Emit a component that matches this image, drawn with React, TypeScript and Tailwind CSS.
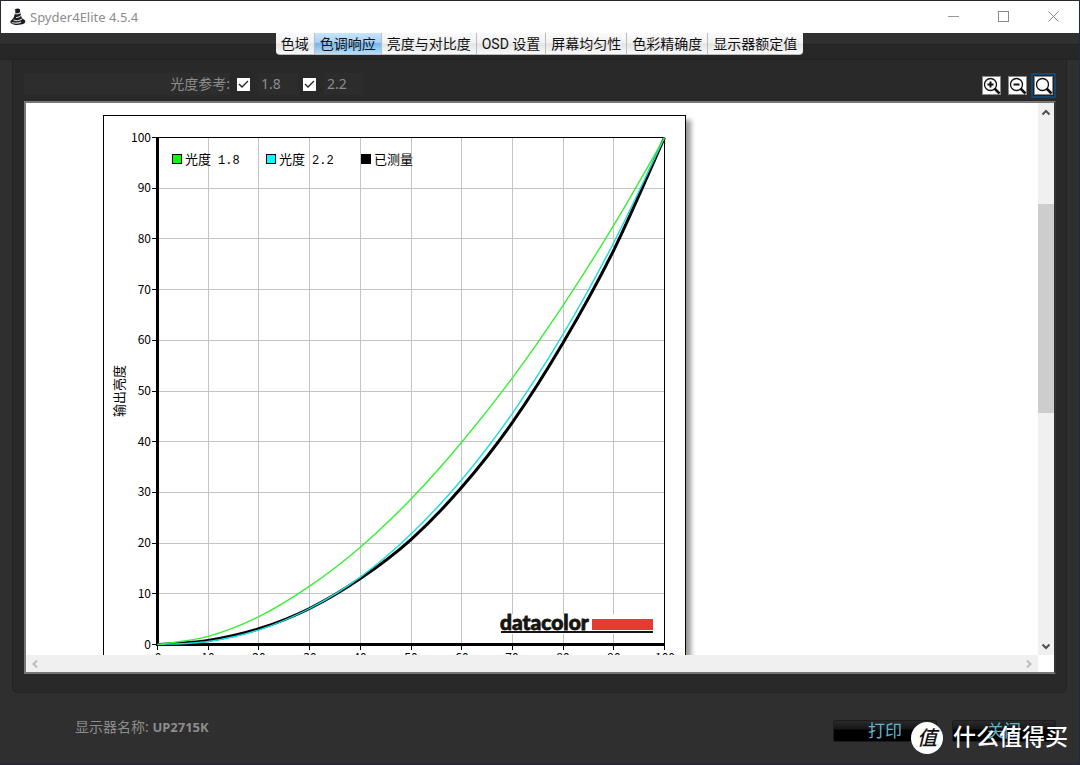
import React from "react";

const uiFont = "font-['Noto_Sans','Noto_Sans_CJK_SC',sans-serif]";
const cjkFont = "font-['Roboto','Noto_Sans_CJK_SC',sans-serif]";
const chartFont = "font-['Noto_Sans_CJK_SC',sans-serif]";
const monoFont = "font-['Liberation_Mono',monospace]";
const logoFont = "font-['Lato',sans-serif]";

const tabs = [
  "色域",
  "色调响应",
  "亮度与对比度",
  "OSD 设置",
  "屏幕均匀性",
  "色彩精确度",
  "显示器额定值",
];

const steps = [0, 10, 20, 30, 40, 50, 60, 70, 80, 90, 100];
const gamma18 = [0, 1.6, 5.5, 11.5, 19.2, 28.7, 39.9, 52.6, 66.9, 82.7, 100];
const gamma22 = [0, 0.6, 2.9, 7.1, 13.3, 21.8, 32.5, 45.6, 61.2, 79.3, 100];
const measured = [0, 0.8, 3.1, 7.1, 13, 20.7, 31, 43.8, 59.5, 77.8, 100];

const plot = { left: 53.5, top: 21.5, size: 507 };
const px = (v: number) => plot.left + (plot.size * v) / 100;
const py = (v: number) => plot.top + plot.size - (plot.size * v) / 100;
const snap = (v: number) => Math.floor(v) + 0.5;

// smooth curve through the sampled points
const curve = (values: number[]) => {
  const pts = values.map((v, i) => [px(steps[i]), py(v)]);
  let d = `M${pts[0][0]} ${pts[0][1]}`;
  for (let i = 0; i < pts.length - 1; i++) {
    const a = pts[i - 1] || pts[i];
    const b = pts[i];
    const c = pts[i + 1];
    const e = pts[i + 2] || c;
    d += ` C${b[0] + (c[0] - a[0]) / 6} ${b[1] + (c[1] - a[1]) / 6} ${
      c[0] - (e[0] - b[0]) / 6
    } ${c[1] - (e[1] - b[1]) / 6} ${c[0]} ${c[1]}`;
  }
  return d;
};

const TitleBar = () => (
  <header
    className={`flex h-[33px] shrink-0 items-center justify-between border-t border-l border-[#2b2630] bg-white pr-5 pl-2 ${uiFont}`}
  >
    <div className="flex items-center gap-1">
      <svg width="17" height="18" viewBox="0 0 17 18">
        <path
          d="M6 1.2Q8.5 0 11 1.2L11 4L12.8 10L16.2 12.5Q17 16 12 16.600Q8 17.500 4.500 16.400Q0.500 15.500 1.500 13L4.500 10L6.400 4Z"
          fill="#1c1c1c"
        />
        <path
          d="M6 5.500Q9 6.500 11.500 4.500M7 9.500Q10 9.800 11.800 7.500M4.500 12Q9 13.800 13 11M3 14.500Q8 16 12 14"
          stroke="#d8d8d8"
          strokeWidth="1.100"
          fill="none"
        />
      </svg>
      <h1 className="text-[13px] leading-4 text-[#8c8c8c]">Spyder4Elite 4.5.4</h1>
    </div>
    <div className="flex items-center gap-[38px]">
      <button aria-label="最小化">
        <svg width="12" height="12" viewBox="0 0 12 12">
          <path d="M1 5.500H12" stroke="#999" />
        </svg>
      </button>
      <button aria-label="最大化">
        <svg width="12" height="12" viewBox="0 0 12 12">
          <rect x="1.500" y="0.500" width="10" height="10" fill="none" stroke="#888" />
        </svg>
      </button>
      <button aria-label="关闭窗口">
        <svg width="12" height="12" viewBox="0 0 12 12">
          <path d="M1.500 0.500L11.500 10.500M11.500 0.500L1.500 10.500" stroke="#888" />
        </svg>
      </button>
    </div>
  </header>
);

const TabBar = () => (
  <nav className="flex h-[27px] shrink-0 items-start justify-center bg-[linear-gradient(#303030_11px,#222_11px,#222_12px,#282828_12px,#262626_26px,#222_26px)]">
    <div
      role="tablist"
      className={`flex h-[22px] overflow-hidden rounded-b-[4px] border-b border-[#bbb] bg-[linear-gradient(#fafafa,#f2f2f2_45%,#e4e4e4_55%,#fafafa)] text-sm text-[#111] ${cjkFont}`}
    >
      {tabs.map((tab) => (
        <button
          key={tab}
          role="tab"
          aria-selected={tab === "色调响应"}
          className="border-r border-[#bcbcbc] px-[5px] leading-5 whitespace-nowrap last:border-transparent aria-selected:bg-[linear-gradient(#c8e4fc,#a6d2f8_45%,#76b5ee_50%,#b4e0fc)]"
        >
          {tab}
        </button>
      ))}
    </div>
  </nav>
);

const RefCheck = ({ label, id }: { label: string; id: string }) => (
  <div className="flex items-center">
    <span className="relative block size-[13px]">
      <input
        id={id}
        type="checkbox"
        defaultChecked
        className="peer block size-[13px] appearance-none bg-white"
      />
      <svg
        className="pointer-events-none absolute inset-0 hidden peer-checked:block"
        width="13"
        height="13"
        viewBox="0 0 13 13"
      >
        <path d="M2 6L5 9L11 3" fill="none" stroke="#222" strokeWidth="1.300" />
      </svg>
    </span>
    <label
      htmlFor={id}
      className="ml-2 flex h-[22px] w-10 items-center bg-[#2c2c2c] pl-[3px]"
    >
      {label}
    </label>
  </div>
);

const ZoomButton = ({
  title,
  sign,
  active,
}: {
  title: string;
  sign?: string;
  active?: boolean;
}) => (
  <button
    aria-label={title}
    className={`border-2 p-px ${active ? "border-[#17456e] bg-[#222]" : "border-transparent"}`}
  >
    <svg width="19" height="19" viewBox="0 0 19 19" className="block bg-white">
      <rect x="0.500" y="0.500" width="18" height="18" fill="none" stroke="#8a8a8a" />
      <circle cx="8.500" cy="8.500" r="6" fill="none" stroke="#111" strokeWidth="1.300" />
      <path d="M12.500 12.500L17.500 17.500" stroke="#111" strokeWidth="2.500" />
      {sign && <path d={sign} stroke="#111" strokeWidth="2" />}
    </svg>
  </button>
);

const LegendItem = ({
  x,
  color,
  name,
  value,
}: {
  x: number;
  color: string;
  name: string;
  value?: string;
}) => (
  <g>
    <rect x={x + 0.5} y="38.500" width="9" height="9" fill={color} stroke="#000" />
    <text x={x + 13} y="48" fontSize="13">
      {name}
    </text>
    {value && (
      <text x={x + 46} y="48" fontSize="12" className={monoFont}>
        {value}
      </text>
    )}
  </g>
);

const Chart = () => (
  <div className="w-[583px] border border-black bg-white shadow-[5px_5px_5px_#999]">
    <svg width="581" height="600" viewBox="0 0 581 600" className={`block ${chartFont}`}>
      <g stroke="#c4c4c4">
        {steps.slice(1, 10).map((s) => (
          <path key={s} d={`M${snap(px(s))} 22V528M54 ${snap(py(s))}H560`} />
        ))}
      </g>
      <path d="M53 21.500H560.500V532" fill="none" stroke="#000" />
      <path d="M53.500 21V530M52 528.500H561" stroke="#000" strokeWidth="3" />
      <g stroke="#000">
        {steps.map((s) => (
          <path key={s} d={`M${snap(px(s))} 530V534M48 ${snap(py(s))}H53`} />
        ))}
      </g>
      <g fontSize="12">
        {steps.map((s) => (
          <g key={s}>
            <text x="47" y={Math.round(py(s)) + 4} textAnchor="end">
              {s}
            </text>
            <text x={Math.round(px(s))} y="546" textAnchor="middle">
              {s}
            </text>
          </g>
        ))}
      </g>
      <text x="-275" y="20" transform="rotate(-90)" textAnchor="middle" fontSize="13">
        输出亮度
      </text>

      <rect x="396" y="498" width="154" height="20" fill="#fff" />
      <text
        x="396"
        y="514"
        fontSize="21"
        fontWeight="900"
        fill="#161410"
        stroke="#161410"
        strokeWidth="0.800"
        className={logoFont}
      >
        datacolor
      </text>
      <rect x="488" y="503" width="61" height="11" fill="#e63b35" />
      <rect x="397" y="515" width="152" height="2" fill="#161410" />

      <g fill="none">
        <path d={curve(measured)} stroke="#000" strokeWidth="3" />
        <path d={curve(gamma22)} stroke="#18dde2" strokeWidth="1.400" />
        <path d={curve(gamma18)} stroke="#35f035" strokeWidth="1.400" />
      </g>
      <LegendItem x={68} color="#00ff00" name="光度" value="1.8" />
      <LegendItem x={162} color="#00ffff" name="光度" value="2.2" />
      <LegendItem x={257} color="#000" name="已测量" />
    </svg>
  </div>
);

const ArrowButton = ({
  title,
  d,
  color,
  className,
}: {
  title: string;
  d: string;
  color: string;
  className: string;
}) => (
  <button aria-label={title} className={`flex items-center justify-center ${className}`}>
    <svg width="10" height="10" viewBox="0 0 10 10">
      <path d={d} fill="none" stroke={color} strokeWidth="2" />
    </svg>
  </button>
);

const ChartFrame = () => (
  <div className="mt-[3px] grid min-h-0 flex-1 grid-cols-[1fr_16px] grid-rows-[1fr_17px] border-2 border-[#777] border-r-[#333] bg-white">
    <div className="min-h-0 overflow-hidden pt-3 pl-[77px]">
      <Chart />
    </div>
    <div className="flex flex-col bg-[#f0f0f0]">
      <ArrowButton title="向上滚动" d="M1.500 7.500L5 4L8.500 7.500" color="#505050" className="h-[17px]" />
      <div className="flex-[84]" />
      <div className="flex-[209] bg-[#cdcdcd]" />
      <div className="flex-[225]" />
      <ArrowButton title="向下滚动" d="M1.500 2.500L5 6L8.500 2.500" color="#505050" className="h-[17px]" />
    </div>
    <div className="flex items-stretch justify-between bg-[#f0f0f0]">
      <ArrowButton title="向左滚动" d="M7 1.500L3.500 5L7 8.500" color="#bbb" className="w-[17px]" />
      <ArrowButton title="向右滚动" d="M2 1.500L5.500 5L2 8.500" color="#bbb" className="w-[17px]" />
    </div>
    <div className="bg-white" />
  </div>
);

const Panel = () => (
  <main className="mx-3 flex min-h-0 flex-1 flex-col rounded-b-md border-x border-b border-[#222] bg-[#292929] pt-[13px] pr-[10px] pb-[18px] pl-[11px]">
    <div className={`flex h-[25px] items-start justify-between text-sm text-[#8c8c8c] ${uiFont}`}>
      <div className="flex h-[22px] items-center">
        <span className="flex h-[22px] w-[206px] items-center justify-end bg-[#2d2d2d] whitespace-nowrap">
          光度参考:
        </span>
        <div className="ml-[7px] flex gap-[5px]">
          <RefCheck id="gamma18" label="1.8" />
          <RefCheck id="gamma22" label="2.2" />
        </div>
      </div>
      <div className="flex gap-px">
        <ZoomButton title="放大" sign="M5.500 8.500H11.500M8.500 5.500V11.500" />
        <ZoomButton title="缩小" sign="M5.500 8.500H11.500" />
        <ZoomButton title="适合窗口" active />
      </div>
    </div>
    <ChartFrame />
  </main>
);

const Footer = () => (
  <footer className="flex h-[70px] shrink-0 items-center justify-between pr-[23px] pb-[2px] pl-[75px]">
    <p className={`text-sm text-[#8c8c8c] ${uiFont}`}>
      显示器名称: <b className="text-[13px]">UP2715K</b>
    </p>
    <div className={`mt-2 flex gap-[15px] text-[17px] text-[#5fb4cc] ${cjkFont}`}>
      {["打印", "关闭"].map((name) => (
        <button
          key={name}
          className="h-[22px] w-[104px] rounded-[2px] border border-[#1c1c1c] bg-[linear-gradient(#2a2a2a,#161616_40%,#000_45%,#000)] leading-4"
        >
          {name}
        </button>
      ))}
    </div>
  </footer>
);

const App = () => {
  return (
    <div className="relative flex h-screen flex-col overflow-hidden border-r border-[#202a3c] bg-[#2f2f2f]">
      <TitleBar />
      <TabBar />
      <Panel />
      <Footer />
      <div className="h-[2px] shrink-0 bg-[#2a2836]" />
      <div
        className={`pointer-events-none absolute right-[11px] bottom-[11px] flex items-center gap-[10px] text-white ${cjkFont}`}
      >
        <span className="flex size-8 items-center justify-center rounded-full bg-white text-xl font-medium text-[#111] italic">
          值
        </span>
        <span className="text-[23px] leading-8 font-medium">什么值得买</span>
      </div>
    </div>
  );
};

export default App;
